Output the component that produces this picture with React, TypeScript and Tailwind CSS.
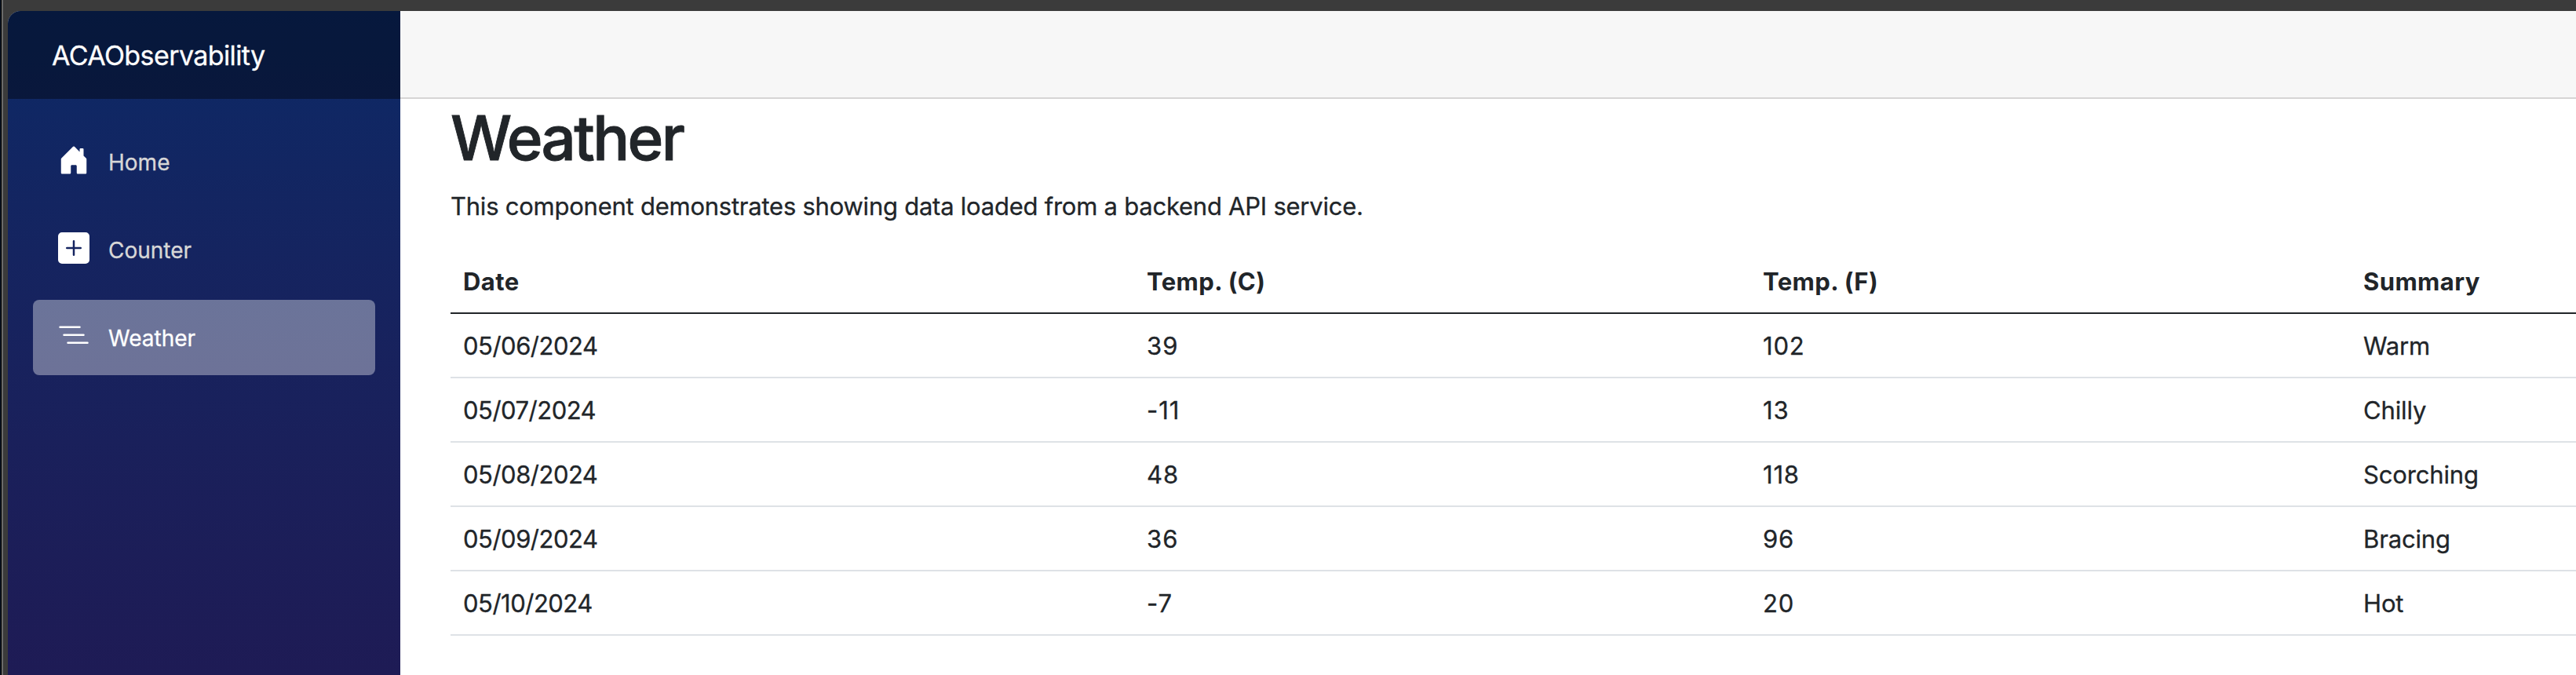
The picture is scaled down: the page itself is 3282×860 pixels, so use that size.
import type { ReactNode } from "react";

function NavIcon({ children }: { children: ReactNode }) {
  return (
    <svg viewBox="0 0 16 16" fill="white" className="mr-6 size-10 shrink-0 -mt-1">
      {children}
    </svg>
  );
}

const HOUSE =
  "M6.5 14.5v-3.505c0-.245.25-.495.5-.495h2c.25 0 .5.25.5.5v3.5a.5.5 0 0 0 .5.5h4a.5.5 0 0 0 .5-.5v-7a.5.5 0 0 0-.146-.354L13 5.793V2.5a.5.5 0 0 0-.5-.5h-1a.5.5 0 0 0-.5.5v1.293L8.354 1.146a.5.5 0 0 0-.708 0l-6 6A.5.5 0 0 0 1.5 7.5v7a.5.5 0 0 0 .5.5h4a.5.5 0 0 0 .5-.5z";
const PLUS_SQUARE =
  "M2 0a2 2 0 0 0-2 2v12a2 2 0 0 0 2 2h12a2 2 0 0 0 2-2V2a2 2 0 0 0-2-2H2zm6.5 4.5v3h3a.5.5 0 0 1 0 1h-3v3a.5.5 0 0 1-1 0v-3h-3a.5.5 0 0 1 0-1h3v-3a.5.5 0 0 1 1 0z";
const LIST_NESTED =
  "M4.5 11.5A.5.5 0 0 1 5 11h10a.5.5 0 0 1 0 1H5a.5.5 0 0 1-.5-.5zm-2-4A.5.5 0 0 1 3 7h10a.5.5 0 0 1 0 1H3a.5.5 0 0 1-.5-.5zm-2-4A.5.5 0 0 1 1 3h10a.5.5 0 0 1 0 1H1a.5.5 0 0 1-.5-.5z";

const nav = [
  { label: "Home", icon: HOUSE, active: false },
  { label: "Counter", icon: PLUS_SQUARE, active: false },
  { label: "Weather", icon: LIST_NESTED, active: true },
];

const rows = [
  ["05/06/2024", "39", "102", "Warm"],
  ["05/07/2024", "-11", "13", "Chilly"],
  ["05/08/2024", "48", "118", "Scorching"],
  ["05/09/2024", "36", "96", "Bracing"],
  ["05/10/2024", "-7", "20", "Hot"],
];

const cols = "grid grid-cols-[871px_785px_765px_1fr]";
const cell = ["tracking-[-0.5px]", "tracking-[1px]", "tracking-[0.8px]", "tracking-[-0.15px]"];

export default function App() {
  return (
    <div className="flex h-[860px] w-[3282px] overflow-hidden bg-[#3b3b3b] font-['Inter',sans-serif] text-[31px] leading-[48px] text-[#212529] [-webkit-text-stroke:0.3px]">
      <div className="w-px shrink-0 bg-[#0a1424]" />
      <div className="w-px shrink-0 bg-black" />
      <div className="w-0.5 shrink-0 bg-[#6a6a6a]" />
      <div className="mt-3.5 ml-1.5 flex min-w-0 flex-1 overflow-hidden rounded-tl-2xl bg-white">
        <aside className="w-[500px] shrink-0 bg-linear-to-b from-[#0b2966] to-[#1e1b55]">
          <div className="flex h-28 items-center bg-black/40 pt-px pl-14 text-[34px] tracking-[-0.6px] text-white">
            ACAObservability
          </div>
          <nav className="flex flex-col gap-4 px-8 pt-8">
            {nav.map((n) => (
              <a
                key={n.label}
                className={
                  "flex h-24 items-center rounded-lg px-8 text-[28px] " +
                  (n.active ? "bg-white/37 text-white" : "text-[#d7d7d7]")
                }
              >
                <NavIcon>
                  <path d={n.icon} />
                </NavIcon>
                <span className="pt-px">{n.label}</span>
              </a>
            ))}
          </nav>
        </aside>
        <main className="min-w-0 flex-1">
          <div className="h-28 border-b-2 border-[#d6d5d5] bg-[#f7f7f7]" />
          <article className="pl-16">
            <h1 className="mb-4 h-24 pt-0.5 text-[78px] leading-[96px] font-medium tracking-[-2.65px] [-webkit-text-stroke:0.9px]">
              Weather
            </h1>
            <p className="mb-[31px] pt-px tracking-[-0.24px]">
              This component demonstrates showing data loaded from a backend API service.
            </p>
            <div>
              <div className={cols + " border-b-2 border-[#212529] font-bold tracking-[0.4px] [-webkit-text-stroke:0px]"}>
                {["Date", "Temp. (C)", "Temp. (F)", "Summary"].map((h) => (
                  <div key={h} className="px-4 pt-[17px] pb-[15px]">{h}</div>
                ))}
              </div>
              {rows.map((r) => (
                <div key={r[0]} className={cols + " border-b-2 border-[#dee2e6]"}>
                  {r.map((v, i) => (
                    <div key={i} className={"px-4 pt-[17px] pb-[15px] " + cell[i]}>{v}</div>
                  ))}
                </div>
              ))}
            </div>
          </article>
        </main>
      </div>
    </div>
  );
}
